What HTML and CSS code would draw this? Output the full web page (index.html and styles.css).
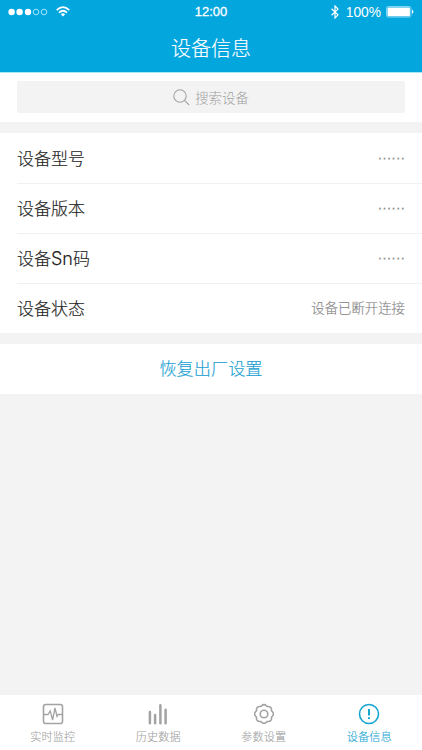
FILE: index.html
```html
<!DOCTYPE html>
<html lang="zh-CN">
<head>
<meta charset="utf-8">
<title>设备信息</title>
<link rel="stylesheet" href="styles.css">
</head>
<body>
<div class="app">
  <header class="header">
    <div class="status">
      <div class="status-side">
        <svg class="signal" width="40" height="8" viewBox="0 0 40 8"><g fill="#fff"><circle cx="3.6" cy="4" r="3.2"/><circle cx="11.6" cy="4" r="3.2"/><circle cx="20" cy="4" r="3.2"/></g><g fill="none" stroke="#b5ecff" stroke-width=".9"><circle cx="28" cy="4" r="2.8"/><circle cx="36" cy="4" r="2.8"/></g></svg>
        <svg class="wifi" width="14" height="11" viewBox="0 0 14 11"><g fill="none" stroke="#fff" stroke-width="1.7"><path d="M.7 4.1Q7-1.7 13.3 4.1"/><path d="M3 6.6Q7 2.9 11 6.6"/></g><path d="M7 10.6 4.8 8.3Q7 6.4 9.2 8.3z" fill="#fff"/></svg>
      </div>
      <span class="time">12:00</span>
      <div class="status-side status-right">
        <svg class="bluetooth" width="8" height="14" viewBox="0 0 8 14"><path d="M.6 3.7 7 9.8 4 13V1L7 4.1.6 10.3" fill="none" stroke="#fff" stroke-width="1.2"/></svg>
        <span class="percent">100%</span>
        <svg class="battery" width="28" height="12" viewBox="0 0 28 12"><rect x=".5" y=".5" width="24.4" height="10.6" rx="1.8" fill="none" stroke="#a3e3fa" stroke-width=".8"/><rect x="1.5" y="1.5" width="22.4" height="8.8" rx=".8" fill="#fff"/><path d="M26 3.8q1.4.4 1.4 2t-1.4 2z" fill="#fff"/></svg>
      </div>
    </div>
    <h1 class="title">设备信息</h1>
  </header>
  <div class="search-bar">
    <div class="search">
      <svg width="17" height="17" viewBox="0 0 17 17" fill="none" stroke="#a5a5a5" stroke-width="1.1"><circle cx="7" cy="7" r="6.2"/><path d="m11.4 11.4 4.8 4.6"/></svg>
      <span>搜索设备</span>
    </div>
  </div>
  <main class="list">
    <div class="row"><span>设备型号</span><span class="value dots">······</span></div>
    <div class="row"><span>设备版本</span><span class="value dots">······</span></div>
    <div class="row"><span>设备<span class="latin">Sn</span>码</span><span class="value dots">······</span></div>
    <div class="row"><span>设备状态</span><span class="value">设备已断开连接</span></div>
  </main>
  <div class="reset">恢复出厂设置</div>
  <nav class="tabs">
    <div class="tab">
      <svg width="22" height="22" viewBox="-11 -11 22 22"><rect x="-9.5" y="-9.5" width="19" height="19" rx="2.3"/><path d="M-9 .5h4l2.2-3.6L-.4 6 2 -6 4 2.4 5.2.5H9" stroke-width="1.3"/></svg>
      <span>实时监控</span>
    </div>
    <div class="tab">
      <svg width="22" height="22" viewBox="-11 -11 22 22"><path d="M-8.1-2.1V9.2M-2.9.9V9.2M2.4-8.8V9.2M7.6-4.2V9.2" stroke-width="2.5" stroke-linecap="round"/></svg>
      <span>历史数据</span>
    </div>
    <div class="tab">
      <svg width="22" height="22" viewBox="-11 -11 22 22"><path d="M8.6-2.4A3.2 3.2 0 0 1 8.6 2.4A1.6 1.6 0 0 0 7.78 4.38A3.2 3.2 0 0 1 4.38 7.78A1.6 1.6 0 0 0 2.4 8.6A3.2 3.2 0 0 1-2.4 8.6A1.6 1.6 0 0 0-4.38 7.78A3.2 3.2 0 0 1-7.78 4.38A1.6 1.6 0 0 0-8.6 2.4A3.2 3.2 0 0 1-8.6-2.4A1.6 1.6 0 0 0-7.78-4.38A3.2 3.2 0 0 1-4.38-7.78A1.6 1.6 0 0 0-2.4-8.6A3.2 3.2 0 0 1 2.4-8.6A1.6 1.6 0 0 0 4.38-7.78A3.2 3.2 0 0 1 7.78-4.38A1.6 1.6 0 0 0 8.6-2.4z" transform="scale(.97)"/><circle r="3.8"/></svg>
      <span>参数设置</span>
    </div>
    <div class="tab active">
      <svg width="22" height="22" viewBox="-11 -11 22 22"><circle r="9.5"/><path d="M0-5V1.6M0 3.2V5" stroke-width="2"/></svg>
      <span>设备信息</span>
    </div>
  </nav>
</div>
</body>
</html>
```
FILE: styles.css
```css
* { box-sizing: border-box; }
body {
  margin: 0;
  background: #f3f3f3;
  color: #222;
  font-family: "Noto Sans CJK SC", sans-serif;
}
.app {
  display: flex;
  flex-direction: column;
  width: 422px;
  height: 750px;
  overflow: hidden;
}
.header {
  height: 73px;
  flex: none;
  background: #04a6de;
  border-bottom: 1px solid #a9e5fb;
  color: #fff;
}
.status {
  display: grid;
  grid-template-columns: 1fr auto 1fr;
  align-items: center;
  height: 24px;
  padding: 0 8px;
}
.status-side { display: flex; align-items: center; height: 24px; }
.status-right { justify-content: flex-end; }
.wifi { margin-left: 8px; margin-top: -2px; }
.time, .percent {
  font-family: "Liberation Sans", Arial, sans-serif;
  line-height: 24px;
}
.time { font-size: 13px; -webkit-text-stroke: .3px #fff; }
.percent { margin: 0 5px 0 7px; padding-top: 1px; font-size: 13.8px; }
.title {
  margin: 0;
  font-size: 20px;
  font-weight: 300;
  line-height: 48px;
  text-align: center;
  -webkit-text-stroke: .15px #fff;
}
.search-bar { flex: none; height: 49px; padding: 8px 17px 9px; background: #fff; }
.search {
  display: flex;
  align-items: center;
  justify-content: center;
  gap: 5px;
  height: 32px;
  border-radius: 2px;
  background: #f3f3f3;
  color: #a0a0a0;
  font-size: 13.4px;
  font-weight: 300;
}
.list { flex: none; margin-top: 11px; padding-left: 17px; background: #fff; }
.row {
  display: flex;
  align-items: center;
  justify-content: space-between;
  height: 50px;
  padding-right: 17px;
  padding-bottom: 3px;
  border-top: 1px solid #f1f1f1;
  font-size: 17px;
  font-weight: 300;
  -webkit-text-stroke: .15px currentColor;
}
.row:first-child { border-top-color: transparent; }
.latin {
  font-family: Inter, "Liberation Sans", sans-serif;
  font-size: 18px;
  line-height: 1;
}
.value { color: #888; font-size: 13.4px; }
.dots {
  font-family: "Liberation Sans", Arial, sans-serif;
  letter-spacing: .1px;
  -webkit-text-stroke: .25px currentColor;
}
.reset {
  flex: none;
  height: 50px;
  margin-top: 11px;
  background: #fff;
  color: #229fd2;
  font-size: 17.2px;
  font-weight: 300;
  line-height: 48px;
  text-align: center;
  -webkit-text-stroke: .15px currentColor;
}
.tabs {
  display: grid;
  grid-template-columns: repeat(4, 1fr);
  height: 55px;
  margin-top: auto;
  background: #fff;
}
.tab {
  display: flex;
  flex-direction: column;
  align-items: center;
  padding-top: 8px;
  color: #a3a3a3;
  font-size: 11.2px;
  font-weight: 300;
  line-height: 22px;
  -webkit-text-stroke: .1px currentColor;
}
.tab svg { fill: none; stroke: currentColor; stroke-width: 1.6; }
.active { color: #16a5d3; }
```
